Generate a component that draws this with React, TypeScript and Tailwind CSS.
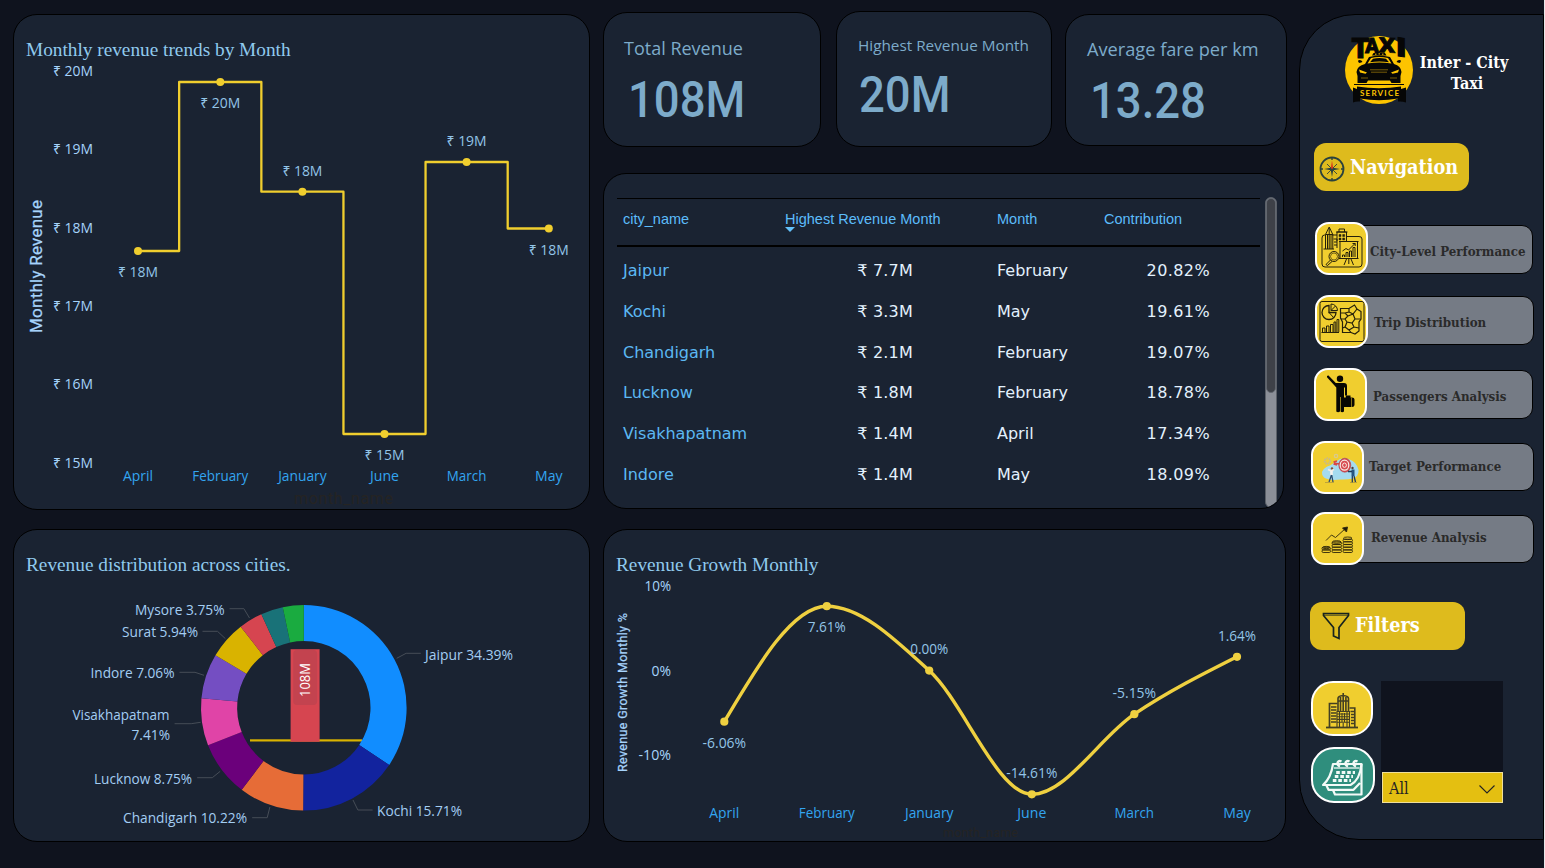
import type { ReactNode } from "react";

const PANEL = "overflow-hidden border border-black bg-[#1a2332]";
const UI = "font-['Open_Sans','Noto_Sans',sans-serif]";

type Pt = [number, number];

function Label({
  x, y, w, children, anchor = "middle", fill = "#93c5e8", size = 14,
}: {
  x: number; y: number; w: number; children: string;
  anchor?: "start" | "middle" | "end"; fill?: string; size?: number;
}) {
  return (
    <text x={x} y={y} textAnchor={anchor} fill={fill} fontSize={size} textLength={w} lengthAdjust="spacingAndGlyphs">
      {children}
    </text>
  );
}

const monthWidths: Record<string, number> = {
  April: 30, February: 56, January: 48.5, June: 29, March: 39.5, May: 27.5,
};

/* ---------- Monthly revenue step chart ---------- */

const trend = [
  { m: "April", x: 138, y: 251, t: "₹ 18M", ly: 277 },
  { m: "February", x: 220.3, y: 82, t: "₹ 20M", ly: 108 },
  { m: "January", x: 302.4, y: 191.7, t: "₹ 18M", ly: 176 },
  { m: "June", x: 384.5, y: 434, t: "₹ 15M", ly: 460 },
  { m: "March", x: 466.6, y: 162, t: "₹ 19M", ly: 146 },
  { m: "May", x: 548.8, y: 228.5, t: "₹ 18M", ly: 255 },
];

function stepPath(points: Pt[]) {
  let d = `M${points[0][0]} ${points[0][1]}`;
  for (let i = 1; i < points.length; i++) {
    const mid = (points[i - 1][0] + points[i][0]) / 2;
    d += `H${mid}V${points[i][1]}`;
  }
  return d + `H${points[points.length - 1][0]}`;
}

function TrendChart() {
  return (
    <svg width="575" height="447" viewBox="14 62 575 447" className={`block overflow-visible ${UI}`}>
      {["₹ 20M", "₹ 19M", "₹ 18M", "₹ 17M", "₹ 16M", "₹ 15M"].map((t, i) => (
        <Label key={t} x={93} y={76 + i * 78.3} w={40} anchor="end" fill="#a6d3fb">{t}</Label>
      ))}
      <text
        transform="translate(42 333) rotate(-90)" fill="#a6d3fb" stroke="#a6d3fb" strokeWidth=".25" fontSize="17"
        textLength="133" lengthAdjust="spacing" className="font-['Roboto',sans-serif]"
      >
        Monthly Revenue
      </text>
      <path d={stepPath(trend.map((p) => [p.x, p.y] as Pt))} fill="none" stroke="#f0ce2e" strokeWidth="2.3" strokeLinejoin="round" />
      {trend.map((p) => (
        <g key={p.m}>
          <circle cx={p.x} cy={p.y} r="4" fill="#f0ce2e" />
          <Label x={p.x} y={p.ly} w={40}>{p.t}</Label>
          <Label x={p.x} y={481} w={monthWidths[p.m]} fill="#33a5f0">{p.m}</Label>
        </g>
      ))}
      <text x="294" y="504" fontSize="16" fill="#252423" textLength="99" className="font-['Roboto',sans-serif]">month_name</text>
    </svg>
  );
}

/* ---------- Revenue donut ---------- */

const slices = [
  { v: 34.39, c: "#118dff" },
  { v: 15.71, c: "#12239e" },
  { v: 10.22, c: "#e66c37" },
  { v: 8.75, c: "#6b007b" },
  { v: 7.41, c: "#e044a7" },
  { v: 7.06, c: "#744ec2" },
  { v: 5.94, c: "#d9b300" },
  { v: 3.75, c: "#d64550" },
  { v: 3.49, c: "#197278" },
  { v: 3.28, c: "#1aab40" },
];

function arc(from: number, to: number) {
  const cx = 303.8, cy = 707.8, R = 102.8, r = 66.7;
  const a = from * 2 * Math.PI, b = to * 2 * Math.PI;
  const p = (rad: number, t: number) => `${(cx + rad * Math.sin(t)).toFixed(2)} ${(cy - rad * Math.cos(t)).toFixed(2)}`;
  const big = to - from > 0.5 ? 1 : 0;
  return `M${p(R, a)}A${R} ${R} 0 ${big} 1 ${p(R, b)}L${p(r, b)}A${r} ${r} 0 ${big} 0 ${p(r, a)}Z`;
}

function Donut() {
  let acc = 0;
  const leaders = [
    "229.6,608.7 243.9,608.7 249.5,618",
    "202.5,631.3 217.5,631.3 225.4,638.7",
    "179.5,672.3 195,672.3 204,675.3",
    "174.6,723.7 191.2,723.7 200.6,722.3",
    "197.2,777.7 212.3,777.7 220.2,771.3",
    "252.2,817.7 267.2,817.7 269.9,807",
    "372.6,810 357.9,810 353,800",
    "420.8,653.3 406.1,653.3 396.7,658.3",
  ];
  return (
    <svg width="575" height="263" viewBox="14 578 575 263" className={`block ${UI}`}>
      <rect x="250" y="739.3" width="112" height="2.2" fill="#d9b300" />
      {slices.map((s) => {
        const from = acc / 100;
        acc += s.v;
        return <path key={s.c} d={arc(from, acc / 100)} fill={s.c} />;
      })}
      {leaders.map((l) => (
        <polyline key={l} points={l} fill="none" stroke="#464d57" strokeWidth="1" />
      ))}
      <rect x="290.6" y="649.2" width="29" height="92.6" fill="#d64550" />
      <rect x="293.2" y="650" width="24" height="55" rx="4" fill="#c3434f" />
      <text transform="translate(310 697) rotate(-90)" fontSize="14.5" fill="#fff" textLength="34" lengthAdjust="spacingAndGlyphs">108M</text>
      <Label x={224.5} y={615} w={89.5} anchor="end" fill="#a3cdf2">Mysore 3.75%</Label>
      <Label x={198} y={637} w={76} anchor="end" fill="#a3cdf2">Surat 5.94%</Label>
      <Label x={174.5} y={678} w={84} anchor="end" fill="#a3cdf2">Indore 7.06%</Label>
      <Label x={169.5} y={720} w={97} anchor="end" fill="#a3cdf2">Visakhapatnam</Label>
      <Label x={170} y={740} w={38.5} anchor="end" fill="#a3cdf2">7.41%</Label>
      <Label x={192} y={784} w={98} anchor="end" fill="#a3cdf2">Lucknow 8.75%</Label>
      <Label x={247} y={823} w={124} anchor="end" fill="#a3cdf2">Chandigarh 10.22%</Label>
      <Label x={377} y={816} w={85} anchor="start" fill="#a3cdf2">Kochi 15.71%</Label>
      <Label x={425} y={660} w={88} anchor="start" fill="#a3cdf2">Jaipur 34.39%</Label>
    </svg>
  );
}

/* ---------- Monthly growth curve ---------- */

const growth = [
  { m: "April", x: 724.3, y: 721.7, t: "-6.06%", w: 43.5, ly: 748 },
  { m: "February", x: 826.8, y: 606.2, t: "7.61%", w: 38, ly: 632 },
  { m: "January", x: 929.2, y: 670.6, t: "0.00%", w: 38, ly: 654 },
  { m: "June", x: 1031.8, y: 794.3, t: "-14.61%", w: 51, ly: 778 },
  { m: "March", x: 1134.3, y: 714.2, t: "-5.15%", w: 43.5, ly: 698 },
  { m: "May", x: 1237, y: 656.8, t: "1.64%", w: 38, ly: 641 },
];

function monotonePath(p: Pt[]) {
  const n = p.length;
  const s: number[] = [];
  for (let i = 0; i < n - 1; i++) s.push((p[i + 1][1] - p[i][1]) / (p[i + 1][0] - p[i][0]));
  const t: number[] = new Array(n).fill(0);
  for (let i = 1; i < n - 1; i++) {
    const h0 = p[i][0] - p[i - 1][0], h1 = p[i + 1][0] - p[i][0];
    const q = (s[i - 1] * h1 + s[i] * h0) / (h0 + h1);
    t[i] = (Math.sign(s[i - 1]) + Math.sign(s[i])) * Math.min(Math.abs(s[i - 1]), Math.abs(s[i]), 0.5 * Math.abs(q));
  }
  t[0] = (3 * s[0] - t[1]) / 2;
  t[n - 1] = (3 * s[n - 2] - t[n - 2]) / 2;
  let d = `M${p[0][0]} ${p[0][1]}`;
  for (let i = 0; i < n - 1; i++) {
    const h = (p[i + 1][0] - p[i][0]) / 3;
    d += `C${p[i][0] + h} ${p[i][1] + h * t[i]} ${p[i + 1][0] - h} ${p[i + 1][1] - h * t[i + 1]} ${p[i + 1][0]} ${p[i + 1][1]}`;
  }
  return d;
}

function GrowthChart() {
  return (
    <svg width="681" height="271" viewBox="604 570 681 271" className={`block ${UI}`}>
      <Label x={671} y={591} w={26.5} anchor="end" fill="#a6d3fb">10%</Label>
      <Label x={671} y={676} w={19.5} anchor="end" fill="#a6d3fb">0%</Label>
      <Label x={671} y={760} w={32.5} anchor="end" fill="#a6d3fb">-10%</Label>
      <text
        transform="translate(627 772) rotate(-90)" fill="#a6d3fb" stroke="#a6d3fb" strokeWidth=".25" fontSize="12.5"
        textLength="159" lengthAdjust="spacing" className="font-['Roboto',sans-serif]"
      >
        Revenue Growth Monthly %
      </text>
      <path d={monotonePath(growth.map((p) => [p.x, p.y] as Pt))} fill="none" stroke="#efd040" strokeWidth="3.4" />
      {growth.map((p) => (
        <g key={p.m}>
          <circle cx={p.x} cy={p.y} r="4.1" fill="#efd040" />
          <Label x={p.x} y={p.ly} w={p.w}>{p.t}</Label>
          <Label x={p.x} y={818} w={monthWidths[p.m]} fill="#33a5f0">{p.m}</Label>
        </g>
      ))}
      <text x="943" y="837" fontSize="12.5" fill="#252423" textLength="75" className="font-['Roboto',sans-serif]">month_name</text>
    </svg>
  );
}

/* ---------- Table ---------- */

const rows = [
  ["Jaipur", "₹ 7.7M", "February", "20.82%"],
  ["Kochi", "₹ 3.3M", "May", "19.61%"],
  ["Chandigarh", "₹ 2.1M", "February", "19.07%"],
  ["Lucknow", "₹ 1.8M", "February", "18.78%"],
  ["Visakhapatnam", "₹ 1.4M", "April", "17.34%"],
  ["Indore", "₹ 1.4M", "May", "18.09%"],
];

function CityTable() {
  return (
    <section className={`mt-[26px] flex h-[336px] w-[681px] rounded-[23px] ${PANEL}`}>
      <div className="mt-[24px] ml-[13px] w-[643px]">
        <div className="grid h-[49px] grid-cols-[162px_212px_107px_1fr] border-t border-b-2 border-black pt-[10px] pl-[6px] font-['Liberation_Sans',sans-serif] text-[14.5px] leading-[20px] text-[#5cbcfb]">
          <span>city_name</span>
          <span className="relative">
            Highest Revenue Month
            <svg width="10" height="5" viewBox="0 0 10 5" className="absolute top-[18px] left-0"><path d="M0 0H10L5 5Z" fill="#63c1fb" /></svg>
          </span>
          <span>Month</span>
          <span>Contribution</span>
        </div>
        <div className="pt-[4px] font-['DejaVu_Sans',sans-serif] text-[16px] text-[#e3f1fd]">
          {rows.map((r) => (
            <div key={r[0]} className="grid h-[40.7px] grid-cols-[162px_128px_84px_107px_106px] items-center pl-[6px]">
              <span className="text-[#5cb8f2]">{r[0]}</span>
              <span className="text-right tracking-[0.2px]">{r[1]}</span>
              <span />
              <span>{r[2]}</span>
              <span className="text-right tracking-[0.4px]">{r[3]}</span>
            </div>
          ))}
        </div>
      </div>
      <div className="mt-[23px] ml-[5px] h-[311px] w-[12px] rounded-[6px] border border-[#5b6068] bg-[#8b8f98]">
        <div className="h-[195px] w-[10px] rounded-[5px] border border-[#62676f] bg-[#3e4148]" />
      </div>
    </section>
  );
}

/* ---------- Sidebar icons ---------- */

function TaxiLogo() {
  return (
    <svg width="70" height="70" viewBox="0 0 70 70" className="overflow-visible">
      <circle cx="35" cy="35" r="34" fill="#fdc400" />
      <g className="font-['Roboto',sans-serif]" fontWeight="900" fill="#060606" stroke="#060606" strokeWidth=".8">
        <text transform="matrix(1.3 0 0 1.28 7.600 22.800)" fontSize="22">T</text>
        <text transform="matrix(.98 0 0 .95 21 17.500)" fontSize="21">A</text>
        <text transform="matrix(1.2 .06 0 .98 35 17)" fontSize="21">X</text>
        <text transform="matrix(1.650 .25 0 1.25 52 20.800)" fontSize="21">I</text>
      </g>
      <path d="M28 20.500 29.500 18Q35 16.500 41 18L42.500 20.500Z" fill="#060606" />
      <path d="M31 19.200h1.5M34.500 18.900h1.5M38 19.200h1.5" stroke="#fdc400" strokeWidth="1" />
      <path d="M15.500 28q-2-.8-1.200-2.800 3-1 4.200 1.800ZM55.500 28q2-.8 1.200-2.800-3-1-4.200 1.800Z" fill="#060606" />
      <path d="M21 29 25 22Q35 19 46 22L50 29Q57 31 57.500 37L56.500 41V48H47.500L46 45.500H24L22.500 48H13.500V41L12.500 37Q13 31 21 29Z" fill="#060606" />
      <path d="M23.500 28.500 27 23Q35 21 44 23L47.500 28.500Q35 26.600 23.500 28.500Z" fill="#fdc400" />
      <path d="M26 27.300 29 23.700Q35 22.500 42 23.700L45 27.300Q35 25.900 26 27.300Z" fill="#060606" />
      <path d="M15 34.500 23 37.500 21.500 38.800 16 37.500ZM55 34.500 47 37.500 48.500 38.800 54 37.500Z" fill="#fdc400" />
      <path d="M26 34.800H44M27 37.200H43M17 43H24M46 43H53" stroke="#a98308" strokeWidth=".7" />
      <path d="M10 49.500H60" stroke="#060606" strokeWidth="1" />
      <path d="M9 52.500 13 54V51.500Q35 55 57 51.500V54L62 52.500V67.500Q58 66 54 66.500V63.500Q35 67 16 63.500V66.500Q12 66 9 67.500Z" fill="#060606" />
      <text x="16" y="61.200" fontSize="8" fontWeight="700" fill="#fdc400" textLength="39" className="font-['Lato',sans-serif]">SERVICE</text>
    </svg>
  );
}

function Compass() {
  return (
    <svg width="26" height="26" viewBox="0 0 26 26">
      <circle cx="13" cy="13" r="11.500" fill="none" stroke="#2b423d" strokeWidth="1.800" />
      <path d="M13 1v3M13 22v3M1 13h3M22 13h3" stroke="#2b423d" strokeWidth="1.400" />
      <path d="M8 8 18 18M18 8 8 18" stroke="#2b423d" strokeWidth=".9" />
      <path d="M5 13 11.800 11.800 14.200 11.800 21 13 14.200 14.200 13 21 11.800 14.200Z" fill="#2b423d" />
      <path d="M13 4.500 14.200 12 13 13 11.800 12Z" fill="#d83a1c" />
    </svg>
  );
}

function CityIcon() {
  return (
    <svg width="53" height="53" viewBox="0 0 53 53" fill="none" stroke="#25200a" strokeWidth="1">
      <path d="M10 13H9.500Q7 13 7 16V42Q7 45 10 45H44Q47 45 47 42V17Q47 14.500 44 14.500H32M17 13H22" />
      <path d="M10.500 27V12.500L14.200 5 17.800 12.500V27M12.500 27V12M14.200 27V6M16 27V12M8.500 27H19M10.500 12.500H17.800" />
      <path d="M18.500 17H22V26M19 20H22M19 23H22" />
      <path d="M22 19V10H31.500V19M24 10V7H29.500V10M21 10H32.500" />
      <path d="M24 12.500h2v2h-2zM27.700 12.500h2v2h-2zM24 16h2v2h-2zM27.700 16h2v2h-2z" fill="#25200a" strokeWidth=".5" />
      <path d="M24 19.500H43.500M25 19.500V36.500H42.500V19.500M24 36.500H43.500M33.800 37V42M31.500 37 29 43M36 37 38.500 43" />
      <path d="M27.500 35V33H29.500V35M31 35V30.500H33V35M34.500 35V29H36.500V35M38 35V25.500H40V35M27.500 29 31 26.500 33.500 28 40 21.500M37.500 21.500H40.200V24" />
      <circle cx="19" cy="34.500" r="5" /><circle cx="19" cy="34.500" r="3.500" strokeWidth=".6" />
      <path d="M15.500 38 11 42.500 12.500 43.500 17 39.500" />
    </svg>
  );
}

function TripIcon() {
  return (
    <svg width="53" height="53" viewBox="0 0 53 53" fill="none" stroke="#25200a" strokeWidth="1">
      <rect x="5" y="6.500" width="44" height="40" rx="2" />
      <path d="M14 10.500A7 7 0 1 0 21 17.500H14Z" strokeWidth="1.300" />
      <path d="M16 9V15.500H22.500A6.500 6.500 0 0 0 16 9ZM14 17.500 18.500 22.500M16 15.500 20.500 11" />
      <path d="M6.500 37.500H24M7.500 37V33H10V37M11.500 37V31H14V37M15.500 37V29.500H18V37M19 37V27H20.800V37M22 37V24.500H23.800V37" />
      <path d="M25.500 13.500H34L39.500 10 42 14 46 16.500V24L44 27V36L40 39 36 37.500H27.500V27L25.500 23Z" strokeWidth="1.200" />
      <path d="M25.500 18H30L33 21 30 24H26M33 21 38 19 42 14M38 19 40 24 45.500 24M40 24 37 28 32 27 30 24M37 28 39 32 44 33M32 27 30 32 27.500 33M30 32 34 35 39 32M34 35 36 37.500M34 13.500V17L38 19M30 18 34 17" strokeWidth="1.200" />
    </svg>
  );
}

function PassengerIcon() {
  return (
    <svg width="53" height="53" viewBox="0 0 53 53" fill="#080703">
      <circle cx="26" cy="10.800" r="3.200" />
      <path d="M14.500 7.500 21.800 15H30Q33 15 33 18V27.500H31V19.500H30V43.500Q28 45 26.600 43.500V29H26V43.500Q24 45 22.300 43.500V19.500L13 9.200Q12.500 7.200 14.500 7.500Z" />
      <path d="M29 29.500H31.800V27.500H36.500V29.500H38Q40.500 29.500 40.500 31.500V37Q40.500 39 38 39H29Z" />
      <path d="M37.500 29.500V39" stroke="#a18a20" strokeWidth=".8" />
    </svg>
  );
}

function TargetIcon() {
  return (
    <svg width="53" height="53" viewBox="0 0 53 53">
      <path d="M11 31Q13 26 19 24.500L29 18Q38 16 44 22 50 29 46 35 42 39 30 38.500 18 40 13 36.500 10.500 34 11 31Z" fill="#a5dbef" />
      <circle cx="16.500" cy="20" r="2.700" fill="none" stroke="#c8b98b" strokeWidth="2" strokeDasharray="1.500 .8" />
      <circle cx="25" cy="15" r="1.700" fill="none" stroke="#d9ca8d" strokeWidth="1.200" />
      <path d="M23 22 31 23.500M22.500 21 26 20M22.500 23 26 24" stroke="#d84747" strokeWidth="1.500" />
      <ellipse cx="33.800" cy="24.200" rx="6" ry="7" fill="#d94a50" stroke="#a64149" strokeWidth=".6" />
      <ellipse cx="33.500" cy="24.200" rx="4.300" ry="5" fill="none" stroke="#f8eee6" strokeWidth="1.200" />
      <ellipse cx="33.500" cy="24.200" rx="1.900" ry="2.200" fill="none" stroke="#f8eee6" strokeWidth="1" />
      <circle cx="21" cy="27.500" r="1.200" fill="#8c4b31" />
      <path d="M17 28.500 20 30 23 28.500" stroke="#f2e9e4" strokeWidth="1.500" fill="none" />
      <path d="M20.500 29.500V34" stroke="#f7f3ee" strokeWidth="2.600" />
      <path d="M20.500 34 18 41M20.700 34 22 41" stroke="#2d4c6e" strokeWidth="1.300" />
      <circle cx="41.500" cy="27" r="1.200" fill="#51413a" />
      <path d="M42 28.500V35" stroke="#24547f" strokeWidth="3" />
      <path d="M41 30.500H37M41.300 35V41.500M43 35 44.500 41" stroke="#1f3a5a" strokeWidth="1.300" />
      <path d="M14 41.500H23M39 41.500H46" stroke="#9b8743" strokeWidth=".6" />
    </svg>
  );
}

function RevenueIcon() {
  const stack = (x: number, w: number, top: number) => {
    const out: ReactNode[] = [];
    for (let y = 40.5; y >= top; y -= 2.7) {
      out.push(<rect key={y} x={x} y={y - 2.5} width={w} height="2.500" rx="1.200" />);
    }
    return out;
  };
  return (
    <svg width="53" height="53" viewBox="0 0 53 53" fill="none" stroke="#2c260b" strokeWidth=".9">
      {stack(11, 8.5, 37)}
      {stack(21, 9.5, 32)}
      {stack(32, 9.5, 28)}
      <ellipse cx="15.200" cy="35.500" rx="3.800" ry="1.100" />
      <ellipse cx="25.700" cy="30" rx="4.300" ry="1.300" />
      <ellipse cx="36.700" cy="26.300" rx="4.300" ry="1.300" />
      <path d="M15 28.500 20.500 23 24.500 25.500 34.500 16.500" />
      <path d="M31.500 16 36.500 15 35.500 20Z" fill="#1d1907" />
    </svg>
  );
}

function BuildingsIcon() {
  return (
    <svg width="34" height="36" viewBox="0 0 34 36" fill="none" stroke="#433f22" strokeWidth="1.100">
      <path d="M1 34.500H33" strokeWidth="1.800" />
      <path d="M4.500 34V10.500H12.500M6 14H11.500M6 17H11.500M6 20H11.500M6 23H11.500M6 26H11.500M6 29H11.500" strokeWidth="1.700" />
      <path d="M13 18V5.500Q13 3 18 2.500 23.500 3 23.500 5.500V18M18.200 0V18M15.500 4V18M20.900 4V18M13 8H23.500" strokeWidth="1.600" />
      <path d="M12 34V18.500H24.500V34M14.500 18.500V34M22 18.500V34M17 20V29M19.500 20V29M12 21H24.500M12 23.700H24.500M12 26.400H24.500M12 29.200H24.500M18.200 30V34" />
      <path d="M24.500 15H29.800V34M25.500 18.500H29M26 21.500H29M26 24.500H29M26 27.500H29M26 30.500H29" strokeWidth="1.600" />
    </svg>
  );
}

function CalendarIcon() {
  return (
    <svg width="42" height="38" viewBox="0 0 42 38" fill="none" stroke="#f3faf7" strokeWidth="2.200" strokeLinejoin="round">
      <path d="M12 5H40.500Q39 21 29.500 26H2Q10 19 12 5Z" />
      <path d="M5.500 26.500 7.500 30.800H32.500L39 24M12 31 14 35.500H40.500V5" />
      <path d="M13 9H38.500" strokeWidth="1.300" />
      <path d="M19 7.500Q15.500 6 16.800 3.200 18 1.200 20.500 2.500M27 7.500Q23.500 6 24.800 3.200 26 1.200 28.500 2.500M35 7.500Q31.500 6 32.800 3.200 34 1.200 36.500 2.500" strokeWidth="2.400" />
      <path d="M15.200 13.500H34M13.800 17.500H32M11.800 21.500H30" strokeWidth="2.800" strokeDasharray="3.600 1.900" />
    </svg>
  );
}

/* ---------- Sidebar ---------- */

const SERIF = "font-['DejaVu_Serif_Condensed','DejaVu_Serif',serif]";
const TILE = "relative z-10 h-[53px] w-[53px] shrink-0 overflow-hidden rounded-[14px] border-2 border-white bg-[#f0ce2f]";
const BAR = "-ml-[20px] rounded-r-[11px] border border-black bg-[#757b85] text-[#2a2a2a]";

function NavItem({ row, bar, icon, children }: { row: string; bar: string; icon: ReactNode; children: string }) {
  return (
    <div className={`flex items-start ${row}`}>
      <div className={TILE}><div className="-m-[2px]">{icon}</div></div>
      <div className={`${BAR} ${bar}`}>
        <span className={`block text-[13.2px] font-bold whitespace-nowrap ${SERIF}`}>{children}</span>
      </div>
    </div>
  );
}

function Sidebar() {
  return (
    <aside className={`mt-[14px] ml-[12px] h-[826px] w-[245px] rounded-tl-[56px] rounded-bl-[60px] ${PANEL}`}>
      <div className="flex h-[128px] pt-[20px] pl-[44px]">
        <TaxiLogo />
        <h1 className={`mt-[17px] -ml-[2px] w-[104px] text-center text-[16px] leading-[21px] font-bold text-white ${SERIF}`}>
          <span className="block whitespace-nowrap">Inter - City</span>
          <span className="ml-[6px] block">Taxi</span>
        </h1>
      </div>
      <div className="ml-[14px] flex h-[48px] w-[155px] items-center rounded-[12px] bg-[#debb1d] pl-[5px]">
        <div className="mt-[4px]"><Compass /></div>
        <span className={`ml-[5px] pt-[2px] text-[19.7px] font-bold text-white ${SERIF}`}>Navigation</span>
      </div>
      <nav className="mt-[31px]">
        <NavItem row="ml-[15px]" bar="mt-[3px] h-[49px] w-[185px] pt-[16px] pl-[21px]" icon={<CityIcon />}>City-Level Performance</NavItem>
        <NavItem row="ml-[15px] mt-[20px]" bar="mt-[1px] h-[49px] w-[186px] pt-[16px] pl-[25px]" icon={<TripIcon />}>Trip Distribution</NavItem>
        <NavItem row="ml-[14px] mt-[20px]" bar="mt-[2px] h-[49px] w-[186px] pt-[16px] pl-[25px]" icon={<PassengerIcon />}>Passengers Analysis</NavItem>
        <NavItem row="ml-[11px] mt-[20px]" bar="mt-[2px] h-[48px] w-[190px] pt-[13px] pl-[24px]" icon={<TargetIcon />}>Target Performance</NavItem>
        <NavItem row="ml-[11px] mt-[18px]" bar="mt-[3px] h-[48px] w-[190px] pt-[12px] pl-[26px]" icon={<RevenueIcon />}>Revenue Analysis</NavItem>
      </nav>
      <div className="mt-[37px] ml-[10px] flex h-[48px] w-[155px] items-center rounded-[12px] bg-[#debb1d] pl-[12px]">
        <svg width="28" height="28" viewBox="0 0 28 28" fill="none" stroke="#17231f" strokeWidth="1.700" strokeLinejoin="miter">
          <path d="M1.500 1.500H26.500V3.500L17 15.500V26.500L11.500 24V15.500L1.500 3.500Z" />
          <path d="M2 3.200H26" strokeWidth=".8" />
        </svg>
        <span className={`-mt-px ml-[5px] text-[19.7px] font-bold text-white ${SERIF}`}>Filters</span>
      </div>
      <div className="mt-[31px] ml-[11px] flex">
        <div className="flex flex-col">
          <div className="flex h-[55px] w-[62px] items-center justify-center rounded-[22px] border-[2.5px] border-white bg-[#f0ce2f] pt-[4px]"><BuildingsIcon /></div>
          <div className="mt-[11px] flex h-[56px] w-[64px] items-center justify-center rounded-[23px] border-[2.5px] border-white bg-[#2f8e7d] pt-[5px] pr-[3px]"><CalendarIcon /></div>
        </div>
        <div className="ml-[6px] flex h-[122px] w-[122px] flex-col justify-end bg-[#0f131e] pl-px">
          <div className={`flex h-[31px] items-center justify-between border border-[#efdf9a] bg-[#e4bf11] pr-[7px] pl-[6px] text-[16px] text-[#252423] ${SERIF}`}>
            <span className="pt-[2px]">All</span>
            <svg width="16" height="9" viewBox="0 0 16 9" fill="none" stroke="#252423" strokeWidth="1.100" className="mt-[4px]"><path d="M.5.500 8 8 15.500.500" /></svg>
          </div>
        </div>
      </div>
    </aside>
  );
}

/* ---------- Page ---------- */

function Kpi({ box, title, value }: { box: string; title: ReactNode; value: ReactNode }) {
  return (
    <section className={`flex flex-col items-start rounded-[24px] text-[#7dabca] ${PANEL} ${box}`}>
      <h3 className={`whitespace-nowrap ${UI}`}>{title}</h3>
      <div className="font-['Roboto',sans-serif] text-[50.5px] leading-[50px] font-medium">{value}</div>
    </section>
  );
}

const TITLE = "pl-[12px] font-['Liberation_Serif',serif] text-[19.3px] leading-[24px] whitespace-nowrap text-[#90caee]";

export default function App() {
  return (
    <div className="flex h-[868px] w-[1545px] overflow-hidden bg-[#0f131e] pl-[13px]">
      <div className="w-[577px]">
        <section className={`mt-[14px] h-[496px] rounded-[24px] ${PANEL}`}>
          <h2 className={`${TITLE} h-[47px] pt-[23px]`}>Monthly revenue trends by Month</h2>
          <TrendChart />
        </section>
        <section className={`mt-[19px] h-[313px] rounded-[24px] ${PANEL}`}>
          <h2 className={`${TITLE} h-[48px] pt-[23px]`}>Revenue distribution across cities.</h2>
          <Donut />
        </section>
      </div>

      <main className="ml-[13px] w-[684px]">
        <div className="flex h-[147px] items-start">
          <Kpi
            box="mt-[12px] h-[135px] w-[218px] pt-[21px] pl-[20px]"
            title={<span className="block text-[18px] leading-[28px]">Total Revenue</span>}
            value={<span className="mt-[13px] ml-[4px] block origin-left scale-x-[0.9]">108M</span>}
          />
          <Kpi
            box="ml-[15px] mt-[11px] h-[136px] w-[216px] pt-[20px] pl-[21px]"
            title={<span className="block text-[15.3px] leading-[26px]">Highest Revenue Month</span>}
            value={<span className="mt-[12px] ml-px block origin-left scale-x-[0.9]">20M</span>}
          />
          <Kpi
            box="ml-[13px] mt-[14px] h-[132px] w-[222px] pt-[20px] pl-[21px]"
            title={<span className="block text-[18.2px] leading-[28px]">Average fare per km</span>}
            value={<span className="mt-[13px] ml-[3px] block origin-left scale-x-[0.9]">13.28</span>}
          />
        </div>
        <CityTable />
        <section className={`mt-[20px] h-[313px] w-[683px] rounded-[24px] ${PANEL}`}>
          <h2 className={`${TITLE} h-[40px] pt-[23px]`}>Revenue Growth Monthly</h2>
          <GrowthChart />
        </section>
      </main>

      <Sidebar />
      <div className="w-px bg-[#e8e8ea]" />
    </div>
  );
}
